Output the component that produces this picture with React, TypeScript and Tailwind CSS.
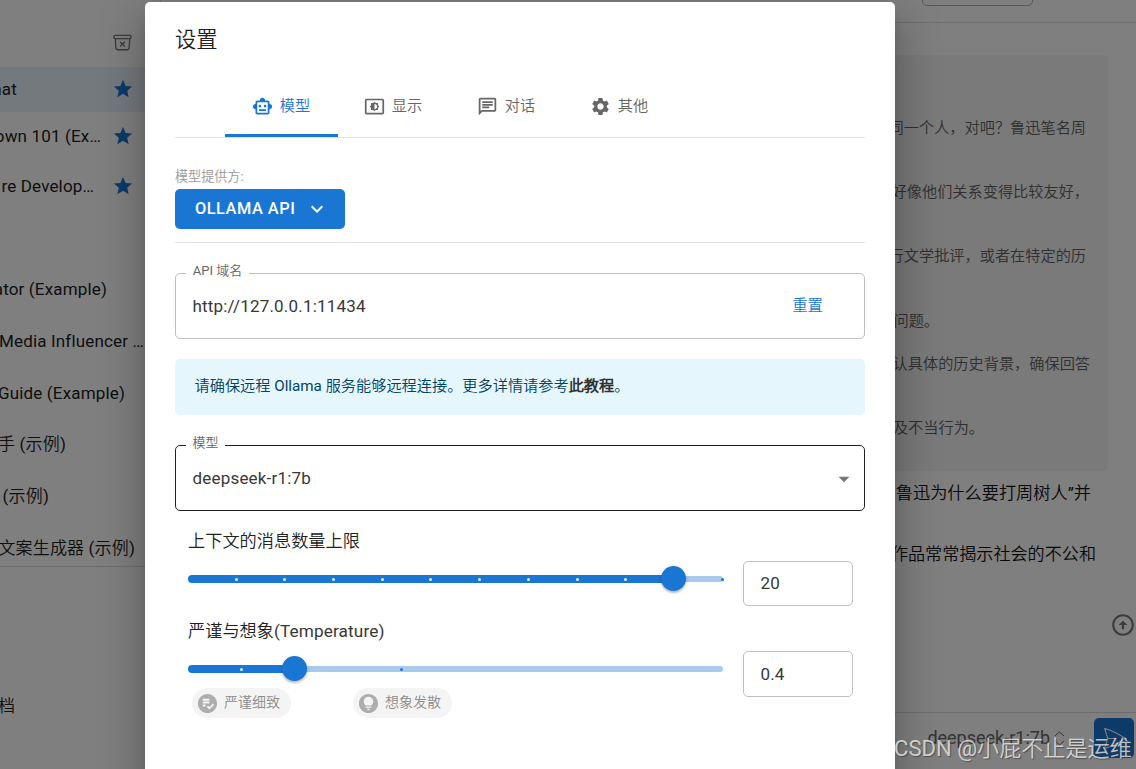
import React from "react";
import {
  MdOutlineSmartToy,
  MdOutlineSettingsBrightness,
  MdOutlineChat,
  MdSettings,
  MdStar,
  MdKeyboardArrowDown,
  MdArrowDropDown,
  MdPlaylistAddCheckCircle,
  MdLightbulbCircle,
  MdOutlineArrowCircleUp,
} from "react-icons/md";
import { HiOutlineArchiveBoxXMark, HiOutlinePaperAirplane } from "react-icons/hi2";

function Session({ row, box, text, star, selected }: { row: string; box: string; text: string; star?: boolean; selected?: boolean }) {
  return (
    <div className={`flex shrink-0 items-center pb-px ${row} ${selected ? "bg-[#e8f2fa]" : ""}`}>
      <div className={`flex shrink-0 justify-end whitespace-nowrap text-[17px] leading-[24px] tracking-[0.16px] text-[#212121] ${box}`}>
        {text}
      </div>
      {star && (
        <div className="ml-auto mr-[26px]">
          <MdStar className="size-[22px] text-[#1976d2]" />
        </div>
      )}
    </div>
  );
}

function Sidebar() {
  return (
    <div className="flex h-full w-[161px] shrink-0 flex-col overflow-hidden border-r border-[#e0e0e0]">
      <div className="flex h-[67px] shrink-0 items-center justify-end pr-[27px] pt-[18px]">
        <HiOutlineArchiveBoxXMark className="size-[21px] text-[#757575]" />
      </div>
      <Session row="h-[45px]" box="w-[17px]" text="hat" star selected />
      <Session row="h-[49px]" box="w-[101px]" text="own 101 (Ex…" star />
      <Session row="h-[51px]" box="w-[94px]" text="re Develop…" star />
      <Session row="mt-[51px] h-[52px] pt-px" box="w-[107px]" text="ator (Example)" />
      <Session row="h-[52px] pt-px" box="w-[144px]" text="Media Influencer …" />
      <Session row="h-[52px] pt-px" box="w-[125px]" text="Guide (Example)" />
      <Session row="h-[51px]" box="w-[66px]" text="手 (示例)" />
      <Session row="h-[52px] pt-px" box="w-[49px]" text="(示例)" />
      <Session row="h-[44px] pt-[9px]" box="w-[135px]" text="文案生成器 (示例)" />
      <div className="h-px shrink-0 bg-[#dadada]" />
      <div className="mt-[127px] flex h-[24px] w-[15px] justify-end text-[17px] leading-[24px] text-[#212121]">档</div>
    </div>
  );
}

function Reasoning({ text, className }: { text: string; className: string }) {
  return (
    <p className={`flex shrink-0 items-center justify-end whitespace-nowrap text-[15.2px] leading-[22px] text-[#606060] ${className}`}>{text}</p>
  );
}

function Conversation() {
  return (
    <div className="flex h-full min-w-0 flex-1 flex-col">
      <div className="flex h-[23px] shrink-0 items-start justify-end border-b border-[#dcdcdc] pr-[103px]">
        <div className="-mt-[10px] h-[16px] w-[111px] rounded-[5px] border border-[#b0b0b0]" />
      </div>
      <div className="mt-[32px] flex h-[416px] w-[947px] shrink-0 flex-col rounded-[5px] bg-[#f4f4f4] pt-[62px]">
        <Reasoning className="h-[22px] pr-[22px]" text="同一个人，对吧？鲁迅笔名周" />
        <Reasoning className="mt-[42px] h-[22px] pr-[19px]" text="好像他们关系变得比较友好，" />
        <Reasoning className="mt-[42px] h-[22px] pr-[22px]" text="行文学批评，或者在特定的历" />
        <Reasoning className="mt-[43px] h-[22px] pr-[169px]" text="问题。" />
        <Reasoning className="mt-[21px] h-[22px] pr-[18px]" text="认具体的历史背景，确保回答" />
        <Reasoning className="mt-[42px] h-[22px] pr-[124px]" text="及不当行为。" />
      </div>
      <p className="mt-[10px] flex h-[24px] shrink-0 justify-end whitespace-nowrap pr-[45px] text-[17.2px] leading-[24px] text-[#111]">鲁迅为什么要打周树人”并</p>
      <p className="mt-[37px] flex h-[24px] shrink-0 justify-end whitespace-nowrap pr-[40px] text-[17.1px] leading-[24px] text-[#111]">作品常常揭示社会的不公和</p>
      <div className="mt-[46px] flex h-[26px] shrink-0 justify-end">
        <MdOutlineArrowCircleUp className="size-[26px] text-[#777]" />
      </div>
      <div className="mt-[74px] flex flex-1 items-start justify-end border-t border-[#dadada] pr-[2px] pt-[5px]">
        <div className="flex h-[40px] items-center pr-[29px] text-[#6a6a6a]">
          <span className="text-[18px] leading-[24px]">deepseek-r1:7b</span>
          <svg className="ml-[4px] h-[15px] w-[11px]" viewBox="0 0 11 15" fill="none" stroke="currentColor">
            <path d="M1 5 5.5 1 10 5M1 10l4.500 4L10 10" />
          </svg>
        </div>
        <div className="flex size-[40px] items-center justify-center rounded-[5px] bg-[#1976d2]">
          <HiOutlinePaperAirplane strokeWidth={1} className="size-[27px] text-white" />
        </div>
      </div>
    </div>
  );
}

function Tab({ icon, label, active }: { icon: React.ReactNode; label: string; active?: boolean }) {
  return (
    <div className={`flex h-[63px] w-[113px] items-center justify-center gap-[7px] border-b-[3px] pt-[3px] text-[15.2px] leading-[22px] ${active ? "border-[#1976d2] pr-[1px] text-[#1976d2]" : "border-transparent pr-[3px] text-[#666]"}`}>
      {icon}
      <span>{label}</span>
    </div>
  );
}

function Field({ label, value, className, labelBox, children }: { label: string; value: string; className: string; labelBox: string; children: React.ReactNode }) {
  return (
    <div className={`relative flex h-[66px] shrink-0 items-center justify-between rounded-[5px] border pl-[16.5px] ${className}`}>
      <span className={`absolute -top-[13px] left-[10px] flex h-[20px] justify-center bg-white text-[13px] leading-[20px] text-[#666] ${labelBox}`}>{label}</span>
      <span className="text-[17px] leading-[24px] tracking-[0.19px] text-[#383838]">{value}</span>
      {children}
    </div>
  );
}

function Slider({ value, marks }: { value: number; marks: number[] }) {
  return (
    <div className="relative flex h-[26px] w-[535px] items-center">
      <div className="h-[6px] w-full rounded-full bg-[#a7caed]" />
      <div className="absolute left-0 top-[9px] h-[8px] rounded-full bg-[#1976d2]" style={{ width: value }} />
      {marks.map((m) => (
        <i key={m} className={`absolute top-[12px] size-[3px] rounded-full ${m < value ? "bg-[#e8f1fa]" : "bg-[#1976d2]"}`} style={{ left: m - 1.75 }} />
      ))}
      <div className="absolute top-[0.25px] size-[25px] rounded-full bg-[#1976d2] shadow-[0_2px_2px_rgba(0,0,0,0.2),0_1px_5px_rgba(0,0,0,0.12)]" style={{ left: value - 12.75 }} />
    </div>
  );
}

function NumberBox({ value, className }: { value: string; className: string }) {
  return (
    <div className={`flex w-[110px] items-center rounded-[5px] border border-[#c0c0c0] pl-[16.5px] text-[17px] leading-[24px] tracking-[0.16px] text-[#383838] ${className}`}>{value}</div>
  );
}

function Chip({ icon, label }: { icon: React.ReactNode; label: string }) {
  return (
    <div className="flex h-[30px] w-[99px] items-center gap-[5px] rounded-full bg-[#f4f4f4] pl-[4px] text-[14px] leading-[20px] text-[#8c8c8c]">
      {icon}
      <span className="-mt-[2px] whitespace-nowrap">{label}</span>
    </div>
  );
}

function SettingsDialog() {
  return (
    <div className="flex h-[790px] w-[750px] shrink-0 flex-col rounded-[5px] bg-white px-[30px] shadow-[0_11px_15px_-7px_rgba(0,0,0,0.2),0_24px_38px_3px_rgba(0,0,0,0.14),0_9px_46px_8px_rgba(0,0,0,0.12)]">
      <h2 className="mt-[22px] h-[32px] shrink-0 text-[21.3px] leading-[32px] text-[#212121]">设置</h2>
      <div className="mt-[18px] flex h-[64px] shrink-0 border-b border-[#e0e0e0] pl-[50px]">
        <Tab active label="模型" icon={<MdOutlineSmartToy className="mt-px size-[21px]" />} />
        <Tab label="显示" icon={<MdOutlineSettingsBrightness className="mt-px size-[21px]" />} />
        <Tab label="对话" icon={<MdOutlineChat className="mt-px size-[21px]" />} />
        <Tab label="其他" icon={<MdSettings className="mt-px size-[21px]" />} />
      </div>
      <div className="mt-[29px] h-[20px] shrink-0 text-[13.1px] leading-[20px] text-[#999]">模型提供方:</div>
      <div className="mt-[2px] flex h-[40px] w-[170px] shrink-0 items-center rounded-[5px] bg-[#1976d2] pl-[20px] text-white">
        <span className="text-[16.4px] font-medium leading-[24px] tracking-[0.49px]">OLLAMA API</span>
        <MdKeyboardArrowDown className="ml-[10px] size-[24px]" />
      </div>
      <div className="mt-[13px] h-px shrink-0 bg-[#e0e0e0]" />
      <div className="mt-[30px] flex flex-col">
        <Field label="API 域名" labelBox="w-[63px]" value="http://127.0.0.1:11434" className="border-[#c0c0c0] pr-[41px]">
          <span className="text-[15.4px] leading-[22px] text-[#1976d2]">重置</span>
        </Field>
      </div>
      <div className="mt-[20px] flex h-[56px] shrink-0 items-center rounded-[5px] bg-[#e5f6fd] pl-[19.5px] pb-[3px] text-[15.2px] leading-[22px] text-[#014361]">
        <span>请确保远程 Ollama 服务能够远程连接。更多详情请参考<b className="font-bold text-[#303030]">此教程</b>。</span>
      </div>
      <div className="mt-[30px] flex flex-col">
        <Field label="模型" labelBox="w-[39px]" value="deepseek-r1:7b" className="border-[#212121] pr-[7px]">
          <MdArrowDropDown className="mt-px size-[26px] text-[#757575]" />
        </Field>
      </div>
      <div className="flex flex-col pl-[13px]">
        <div className="mt-[18px] h-[24px] text-[17.2px] leading-[24px] text-[#212121]">上下文的消息数量上限</div>
        <div className="mt-[8px] flex h-[45px] items-start gap-[20px]">
          <div className="mt-[5px]">
            <Slider value={486} marks={[48.5, 97, 146, 194.5, 243, 292, 340.5, 389.5, 438, 486, 535]} />
          </div>
          <NumberBox value="20" className="h-[45px] pb-px" />
        </div>
        <div className="mt-[13px] h-[24px] text-[17.2px] leading-[24px] text-[#212121]">
          严谨与想象<span className="tracking-[0.13px] text-[#383838]">(Temperature)</span>
        </div>
        <div className="mt-[8px] flex h-[46px] items-start gap-[20px]">
          <div className="mt-[5px]">
            <Slider value={107} marks={[53.5, 214]} />
          </div>
          <NumberBox value="0.4" className="h-[46px]" />
        </div>
        <div className="-mt-[9px] flex gap-[62px] pl-[4px]">
          <Chip label="严谨细致" icon={<MdPlaylistAddCheckCircle className="size-[23px] text-[#adadad]" />} />
          <Chip label="想象发散" icon={<MdLightbulbCircle className="size-[23px] text-[#adadad]" />} />
        </div>
      </div>
    </div>
  );
}

export default function App() {
  return (
    <div className="relative flex h-[769px] w-[1136px] overflow-hidden bg-white font-['Roboto','Noto_Sans_CJK_SC_DemiLight','Noto_Sans_CJK_SC_Light','Noto_Sans_CJK_SC',sans-serif]">
      <Sidebar />
      <Conversation />
      <div className="absolute inset-0 flex justify-center overflow-hidden bg-black/50 pr-[96px] pt-[2px]">
        <SettingsDialog />
      </div>
      <div className="absolute bottom-[7px] left-[894px] whitespace-nowrap text-[22.1px] leading-[28px] text-white/70 [text-shadow:1px_1px_1px_rgba(60,60,60,0.7)]">CSDN @小屁不止是运维</div>
    </div>
  );
}
